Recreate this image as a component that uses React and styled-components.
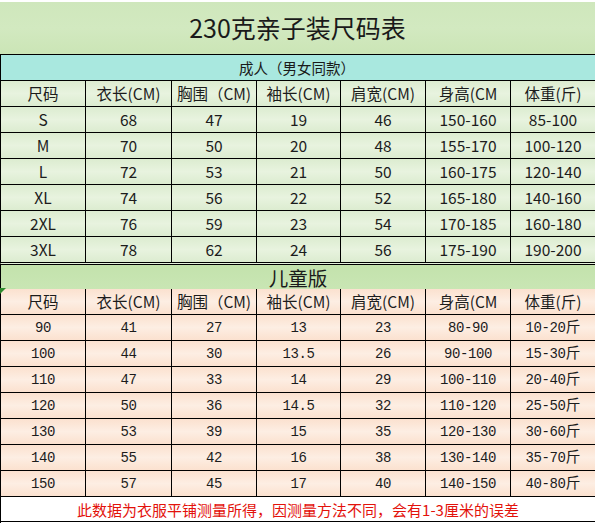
import styled, { createGlobalStyle } from 'styled-components';

const GlobalStyle = createGlobalStyle`
    html, body {
        margin: 0;
        padding: 0;
        background: #fff;
    }
    body {
        font-family: "Noto Sans CJK SC", "Noto Sans", sans-serif;
        color: #1a1a1a;
    }
`;

const adultHead = ['尺码', '衣长(CM)', '胸围（CM)', '袖长(CM)', '肩宽(CM)', '身高(CM', '体重(斤)'];

const adultRows = [
    ['S', '68', '47', '19', '46', '150-160', '85-100'],
    ['M', '70', '50', '20', '48', '155-170', '100-120'],
    ['L', '72', '53', '21', '50', '160-175', '120-140'],
    ['XL', '74', '56', '22', '52', '165-180', '140-160'],
    ['2XL', '76', '59', '23', '54', '170-185', '160-180'],
    ['3XL', '78', '62', '24', '56', '175-190', '190-200'],
];

const kidRows = [
    ['90', '41', '27', '13', '23', '80-90', '10-20斤'],
    ['100', '44', '30', '13.5', '26', '90-100', '15-30斤'],
    ['110', '47', '33', '14', '29', '100-110', '20-40斤'],
    ['120', '50', '36', '14.5', '32', '110-120', '25-50斤'],
    ['130', '53', '39', '15', '35', '120-130', '30-60斤'],
    ['140', '55', '42', '16', '38', '130-140', '35-70斤'],
    ['150', '57', '45', '17', '40', '140-150', '40-80斤'],
];

// splits "10-20斤" so the digits and the CJK unit sit on one baseline
function KidValue({ text }) {
    const unit = text.endsWith('斤');
    return (
        <Mono>
            {unit ? text.slice(0, -1) : text}
            {unit && <Unit>斤</Unit>}
        </Mono>
    );
}

export default function App() {
    return (
        <Page>
            <GlobalStyle />
            <TopStrip />
            <Title>230克亲子装尺码表</Title>
            <Sheet>
                <AdultBanner>成人（男女同款）</AdultBanner>
                {adultHead.map((t, i) => (
                    <Cell key={'ah' + i} $tone="adult" $last={i === 6}>{t}</Cell>
                ))}
                {adultRows.map((row, r) =>
                    row.map((t, i) => (
                        <Cell key={'a' + r + i} $tone="adult" $last={i === 6}>{t}</Cell>
                    ))
                )}
                <KidsBanner>儿童版</KidsBanner>
                {adultHead.map((t, i) => (
                    <Cell key={'kh' + i} $tone="kid" $marked={i === 0} $last={i === 6}>{t}</Cell>
                ))}
                {kidRows.map((row, r) =>
                    row.map((t, i) => (
                        <Cell key={'k' + r + i} $tone="kid" $last={i === 6}>
                            <KidValue text={t} />
                        </Cell>
                    ))
                )}
                <Note>此数据为衣服平铺测量所得，因测量方法不同，会有1-3厘米的误差</Note>
            </Sheet>
        </Page>
    );
}

const Page = styled.div`
    width: 595px;
    height: 525px;
    background: #fff;
`;

const TopStrip = styled.div`
    height: 2px;
    background: #fff;
`;

const Title = styled.div`
    height: 52px;
    display: flex;
    align-items: center;
    justify-content: center;
    background: linear-gradient(180deg, #cfe7bc 0%, #d2e9c0 50%, #cbe5b6 100%);
    font-size: 25px;
    color: #1a1a1a;
    padding-bottom: 2px;
    box-sizing: border-box;
`;

const Sheet = styled.div`
    display: grid;
    grid-template-columns: 85px 86px 85px 84px 85px 85px 84px;
    grid-auto-rows: 26px;
    border-top: 1px solid #000;
    border-left: 1px solid #000;
`;

const Cell = styled.div`
    position: relative;
    display: flex;
    align-items: center;
    justify-content: center;
    box-sizing: border-box;
    border-right: ${p => (p.$last ? 'none' : '1px solid #000')};
    border-bottom: 1px solid #000;
    font-size: 15.5px;
    line-height: 1;
    color: #1c1c1c;
    white-space: nowrap;
    background: ${p =>
        p.$tone === 'kid'
            ? 'linear-gradient(180deg, #fbe1cf 0%, #fdeee3 50%, #fbe1cf 100%)'
            : 'linear-gradient(180deg, #dcecd0 0%, #e8f3df 50%, #dcecd0 100%)'};
    ${p =>
        p.$marked &&
        `
        &::before {
            content: '';
            position: absolute;
            left: -1px;
            top: -1px;
            border-top: 6px solid #2e8b2e;
            border-right: 6px solid transparent;
        }
    `}
`;

const Mono = styled.span`
    display: inline-block;
    font-family: "Liberation Mono", monospace;
    font-size: 14px;
    letter-spacing: -0.4px;
    line-height: 16px;
    padding-top: 1px;
`;

const Unit = styled.span`
    font-family: "Noto Sans CJK SC", sans-serif;
    font-size: 15px;
    letter-spacing: 0;
    line-height: 0;
    vertical-align: baseline;
`;

const AdultBanner = styled.div`
    grid-column: 1 / -1;
    display: flex;
    align-items: center;
    justify-content: center;
    box-sizing: border-box;
    border-bottom: 1px solid #000;
    background: #a9e8df;
    font-size: 14.5px;
    padding-right: 2px;
`;

const KidsBanner = styled.div`
    grid-column: 1 / -1;
    height: 28px;
    display: flex;
    align-items: center;
    justify-content: center;
    box-sizing: border-box;
    border-top: 1px solid #e3f0da;
    border-bottom: 1px solid #000;
    box-shadow: inset 0 1px 0 #000;
    background: linear-gradient(180deg, #c3e2ac 0%, #c9e6b4 100%);
    font-size: 19.5px;
    padding-top: 1px;
    margin-left: -1px;
    border-left: 1px solid #000;
`;

const Note = styled.div`
    grid-column: 1 / -1;
    height: 25px;
    display: flex;
    align-items: center;
    justify-content: center;
    box-sizing: border-box;
    border-bottom: 1px solid #000;
    background: #fff;
    color: #e3120b;
    font-size: 15px;
`;
